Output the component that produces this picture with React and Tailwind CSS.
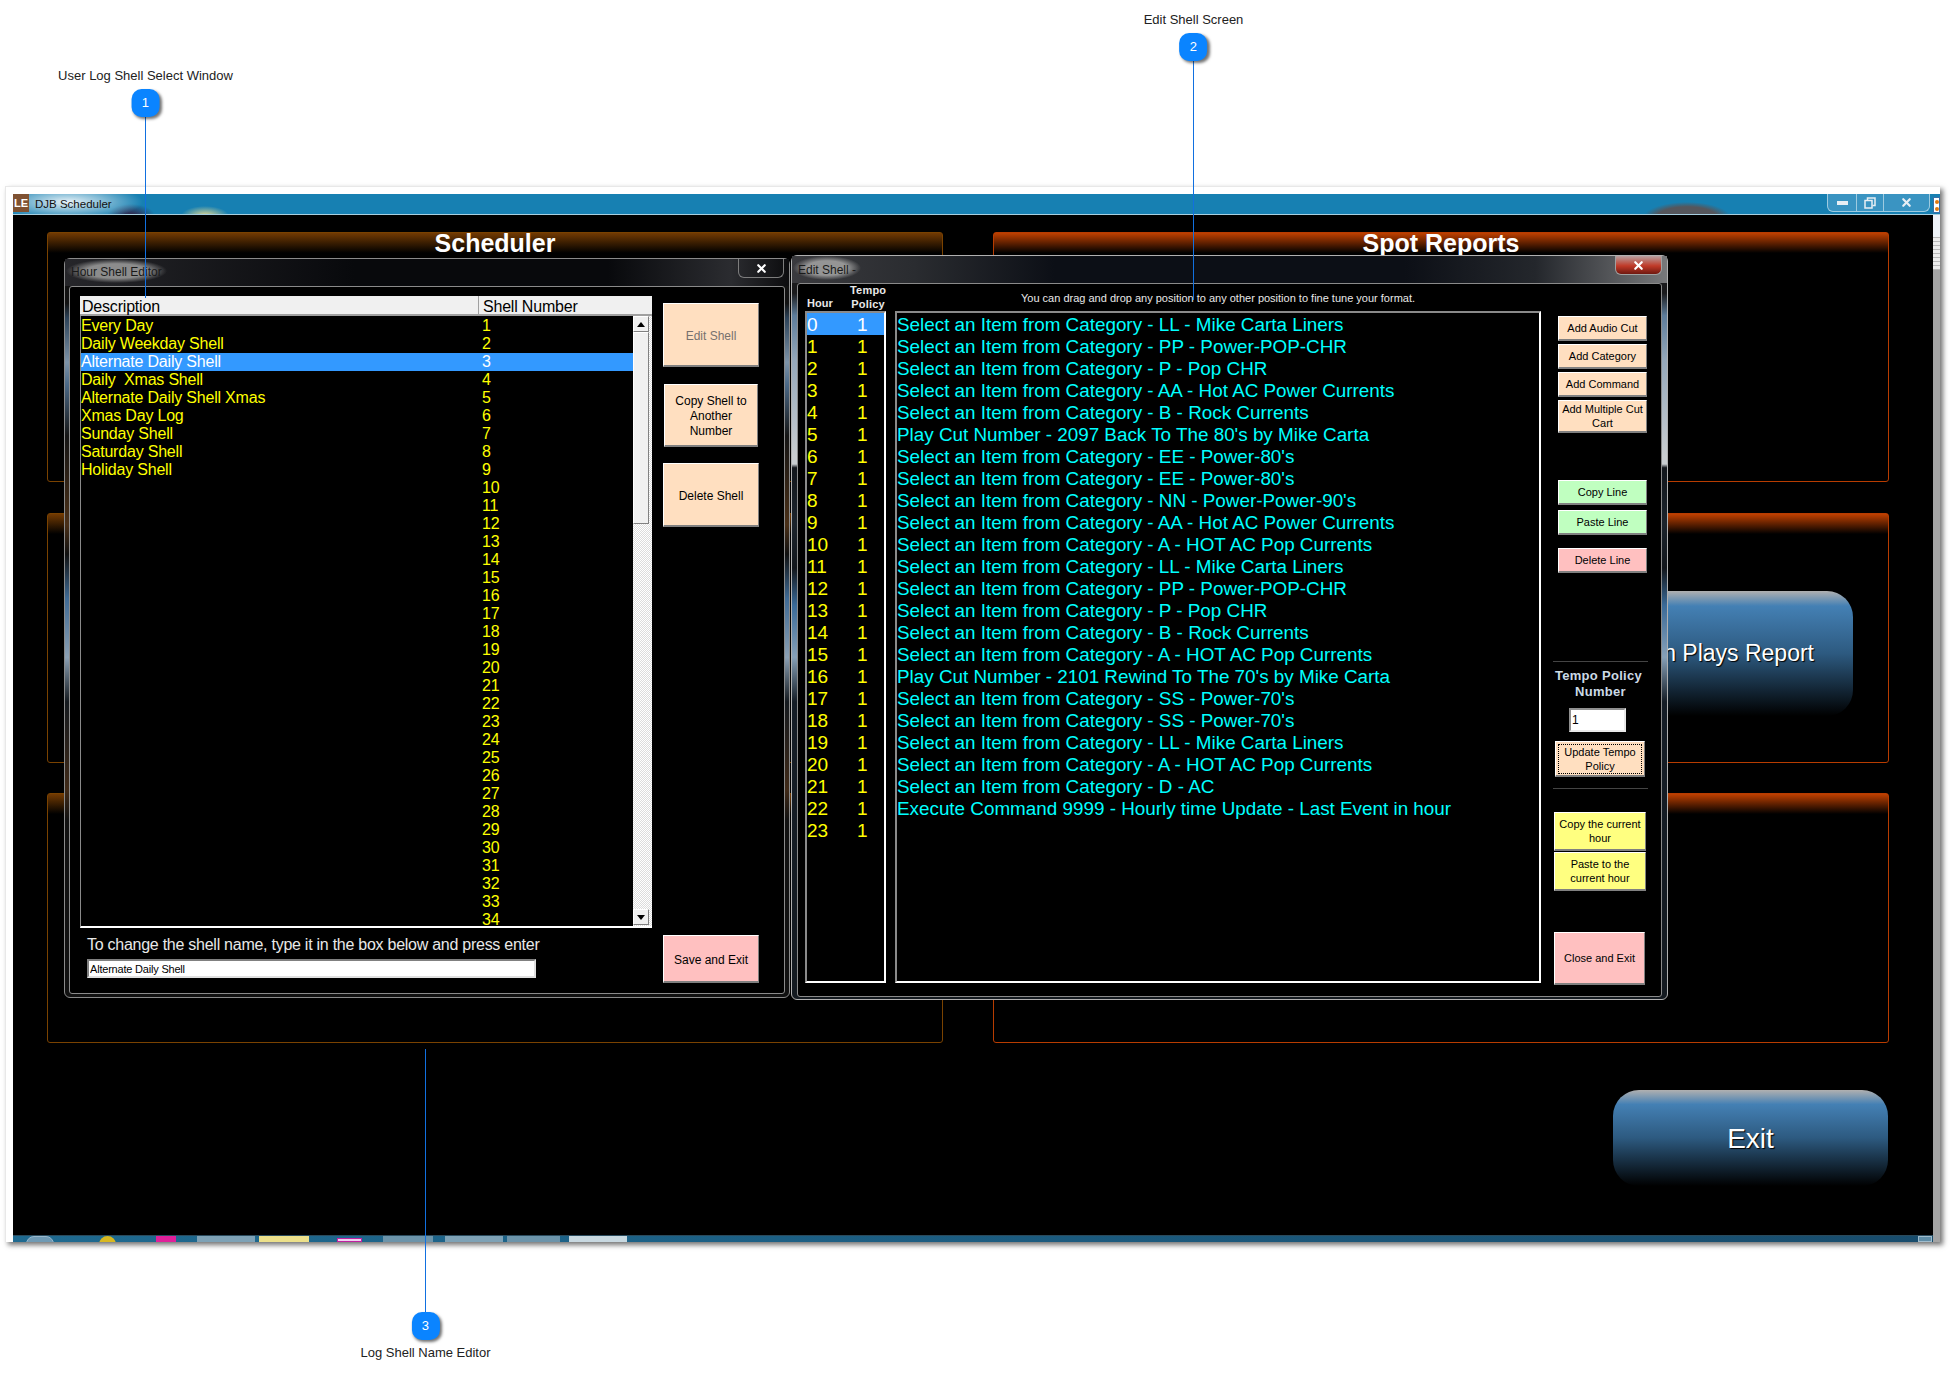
import React from "react";
import { X } from "lucide-react";

const shells = [
  "Every Day",
  "Daily Weekday Shell",
  "Alternate Daily Shell",
  "Daily  Xmas Shell",
  "Alternate Daily Shell Xmas",
  "Xmas Day Log",
  "Sunday Shell",
  "Saturday Shell",
  "Holiday Shell",
];
const shellRows = Array.from({ length: 34 }, (_, i) => ({ number: i + 1, name: shells[i] || "" }));

const hourLines = [
  "Select an Item from Category - LL - Mike Carta Liners",
  "Select an Item from Category - PP - Power-POP-CHR",
  "Select an Item from Category - P - Pop CHR",
  "Select an Item from Category - AA - Hot AC Power Currents",
  "Select an Item from Category - B - Rock Currents",
  "Play Cut Number - 2097 Back To The 80's by Mike Carta",
  "Select an Item from Category - EE - Power-80's",
  "Select an Item from Category - EE - Power-80's",
  "Select an Item from Category - NN - Power-Power-90's",
  "Select an Item from Category - AA - Hot AC Power Currents",
  "Select an Item from Category - A - HOT AC Pop Currents",
  "Select an Item from Category - LL - Mike Carta Liners",
  "Select an Item from Category - PP - Power-POP-CHR",
  "Select an Item from Category - P - Pop CHR",
  "Select an Item from Category - B - Rock Currents",
  "Select an Item from Category - A - HOT AC Pop Currents",
  "Play Cut Number - 2101 Rewind To The 70's by Mike Carta",
  "Select an Item from Category - SS - Power-70's",
  "Select an Item from Category - SS - Power-70's",
  "Select an Item from Category - LL - Mike Carta Liners",
  "Select an Item from Category - A - HOT AC Pop Currents",
  "Select an Item from Category - D - AC",
  "Execute Command 9999 - Hourly time Update - Last Event in hour",
];
const hours = Array.from({ length: 24 }, (_, i) => i);

const bevel = "flex items-center justify-center text-center border border-b-2 border-t-white border-l-white border-r-[#808080] border-b-[#808080]";

const Balloon = ({ n }) => (
  <div className="flex h-7 w-7 items-center justify-center rounded-[10px] bg-[#0a84ff] text-[13px] text-white shadow-[2px_2px_3px_rgba(0,0,0,0.55)]">
    {n}
  </div>
);

const Panel = ({ title, tone, children }) => (
  <div
    className={`h-[250px] rounded-t-[3px] rounded-b-[3px] border ${
      tone === "left" ? "border-[#7a4200]" : "border-[#b83c00]"
    }`}
  >
    <div
      className={`h-5 ${
        tone === "left"
          ? "bg-[linear-gradient(to_bottom,#723a02,#000)]"
          : "bg-[linear-gradient(to_bottom,#bf4000,#000)]"
      }`}
    >
      {title && <div className="text-center text-[25px] leading-5 font-bold text-white">{title}</div>}
    </div>
    {children}
  </div>
);

const ArrowBtn = ({ up }) => (
  <div className="flex h-4 w-4 items-center justify-center border border-t-white border-l-white border-r-[#808080] border-b-[#808080] bg-[#f0f0f0]">
    <svg width="8" height="5" viewBox="0 0 8 5">
      <polygon points={up ? "4,0 8,5 0,5" : "0,0 8,0 4,5"} fill="#000" />
    </svg>
  </div>
);

const ShellEditor = () => (
  <div className="absolute left-[64px] top-[258px] flex h-[740px] w-[726px] flex-col rounded-md border border-[#8a8a8a] bg-[linear-gradient(to_bottom,#111_0,#111_6%,#2c4258_8%,#7d93a8_14%,#4c6a88_17%,#151515_24%,#4a3018_36%,#101010_40%,#3f6a94_46%,#8ba0b4_54%,#151a1f_60%,#402a18_72%,#111_76%,#111_100%)]">
    <div className="flex h-[27px] shrink-0 justify-between bg-[linear-gradient(to_right,#26262a,#08090c_40%,#08090c_75%,#2b2c30_92%,#0c0c0e)] pl-[1px] pr-[5px]">
      <span className="h-[24px] bg-[radial-gradient(ellipse_closest-side,#8c8c8c_60%,transparent)] px-[5px] pt-[5px] text-xs text-[#1a1a1a]">
        Hour Shell Editor
      </span>
      <div className="flex h-[19px] w-[46px] items-center justify-center rounded-b-md border border-t-0 border-[#7d7d7d]">
        <X size={13} strokeWidth={4} className="text-white" />
      </div>
    </div>
    <div className="mx-1 mb-[3px] flex flex-1 gap-[11px] rounded-[3px] border border-[#8a8a8a] bg-black pl-[10px] pr-[25px] pt-[9px] pb-[10px]">
      <div className="flex w-[572px] flex-col">
        <div className="flex h-5 shrink-0 border-b-2 border-[#a0a0a0] bg-[#f0f0f0] text-base leading-[21px] tracking-[-0.2px] text-black">
          <div className="w-[399px] border-r border-[#a0a0a0] pl-[2px]">Description</div>
          <div className="pl-1">Shell Number</div>
        </div>
        <div className="flex h-[612px] shrink-0 overflow-hidden border-b-2 border-l border-b-white border-l-[#8a8a8a]">
          <div className="w-[552px] overflow-hidden pt-[1px]">
            {shellRows.map((row) => (
              <div
                key={row.number}
                className={`flex h-[18px] text-base leading-[18px] tracking-[-0.2px] ${
                  row.number === 3 ? "bg-[#3399ff] text-white" : "text-[#ffff00]"
                }`}
              >
                <span className="w-[401px] whitespace-pre">{row.name}</span>
                <span>{row.number}</span>
              </div>
            ))}
          </div>
          <div className="flex w-[19px] flex-col bg-[repeating-conic-gradient(#fff_0_25%,#dcdcdc_0_50%)] bg-[length:2px_2px] pr-[3px]">
            <ArrowBtn up />
            <div className="h-[192px] w-4 border border-t-white border-l-white border-r-[#808080] border-b-[#808080] bg-[#f0f0f0]" />
            <div className="mt-auto mb-[1px]">
              <ArrowBtn />
            </div>
          </div>
        </div>
        <p className="mt-[7px] pl-[7px] text-base leading-[20px] tracking-[-0.26px] text-[#e8e8e8]">
          To change the shell name, type it in the box below and press enter
        </p>
        <input
          readOnly
          value="Alternate Daily Shell"
          className="mt-1 ml-[7px] h-[19px] w-[449px] border-2 border-t-[#808080] border-l-[#808080] border-r-[#e0e0e0] border-b-[#e0e0e0] bg-white pl-[1px] text-[11px] tracking-[-0.2px] text-black outline-none"
        />
      </div>
      <div className="flex w-[96px] flex-col pt-[7px] text-xs text-black">
        <button className={`${bevel} h-16 bg-[#ffdfc0] pt-[2px] text-[#77716e]`}>Edit Shell</button>
        <button className={`${bevel} mx-[1px] mt-[17px] h-[63px] bg-[#ffdfc0] px-1 pt-[2px] leading-[15px]`}>
          Copy Shell to Another Number
        </button>
        <button className={`${bevel} mt-4 h-16 bg-[#ffdfc0] pt-[2px]`}>Delete Shell</button>
        <button className={`${bevel} mt-auto h-12 bg-[#ffc0c0] pt-[2px]`}>Save and Exit</button>
      </div>
    </div>
  </div>
);

const HourEditor = () => (
  <div className="absolute left-[791px] top-[255px] flex h-[745px] w-[877px] flex-col rounded-md border border-[#b0b0b0] bg-[linear-gradient(to_bottom,#1a1a1c_0,#1a1a1c_5%,#5d7c9a_8%,#95a8ba_14%,#c9cdd0_27%,#c9cdd0_28%,#12161b_28.5%,#1c242c_36%,#12161b_42%,#3a6a98_47%,#86a0b8_54%,#151d26_60%,#141a20_100%)]">
    <div className="flex h-[27px] shrink-0 justify-between bg-[linear-gradient(to_right,#3a3a3e,#2a2c30_14%,#0c0f16_30%,#0c0f16_70%,#24272c_85%,#78797b)] pl-[1px] pr-[5px]">
      <span className="h-[24px] bg-[radial-gradient(ellipse_closest-side,#959595_60%,transparent)] px-[5px] pt-[6px] text-xs text-[#1a1a1a]">
        Edit Shell -
      </span>
      <div className="flex h-[19px] w-[47px] items-center justify-center rounded-b-md border border-t-0 border-[#a0a0a0] bg-[linear-gradient(to_bottom,#b8a0a0,#c03a28_55%,#6f1810)]">
        <X size={13} strokeWidth={4} className="text-white" />
      </div>
    </div>
    <div className="mx-[5px] mb-1 flex flex-1 flex-col rounded-[3px] border border-[#8a8a8a] bg-black">
      <div className="relative h-[27px] shrink-0 text-[11px] leading-[14px] text-[#e8e8e8]">
        <div className="flex h-[27px] items-end pl-[9px] font-bold">
          <span className="w-[43px] pb-[1px]">Hour</span>
          <span className="w-9 text-center tracking-[0.2px]">
            Tempo
            <br />
            Policy
          </span>
          <span className="ml-[135px] pb-[6px] text-[11px] font-normal">
            You can drag and drop any position to any other position to fine tune your format.
          </span>
        </div>
      </div>
      <div className="flex flex-1 pb-[11px] pl-[7px]">
        <div className="h-[672px] w-[81px] shrink-0 border-2 border-t-[#8a8a8a] border-l-[#8a8a8a] border-r-white border-b-white">
          {hours.map((h) => (
            <div
              key={h}
              className={`flex h-[22px] text-[19px] leading-[23px] ${
                h === 0 ? "bg-[#3399ff] text-white" : "text-[#ffff00]"
              }`}
            >
              <span className="w-[50px]">{h}</span>
              <span>1</span>
            </div>
          ))}
        </div>
        <div className="ml-[9px] h-[672px] w-[646px] shrink-0 border-2 border-t-[#8a8a8a] border-l-[#8a8a8a] border-r-white border-b-white">
          {hourLines.map((line, i) => (
            <div key={i} className="h-[22px] whitespace-pre text-[18.85px] leading-[23px] text-[#00ffff]">
              {line}
            </div>
          ))}
        </div>
        <div className="ml-3 flex w-[95px] flex-col text-[11px] leading-[14px] text-black">
          <button className={`${bevel} mt-[5px] ml-[5px] h-[25px] w-[89px] bg-[#ffdfc0]`}>Add Audio Cut</button>
          <button className={`${bevel} mt-[3px] ml-[5px] h-[25px] w-[89px] bg-[#ffdfc0]`}>Add Category</button>
          <button className={`${bevel} mt-[3px] ml-[5px] h-[25px] w-[89px] bg-[#ffdfc0]`}>Add Command</button>
          <button className={`${bevel} mt-[3px] ml-[5px] h-[33px] w-[89px] bg-[#ffdfc0]`}>Add Multiple Cut Cart</button>
          <button className={`${bevel} mt-[47px] ml-[5px] h-[25px] w-[89px] bg-[#c0ffc0]`}>Copy Line</button>
          <button className={`${bevel} mt-[5px] ml-[5px] h-[25px] w-[89px] bg-[#c0ffc0]`}>Paste Line</button>
          <button className={`${bevel} mt-[13px] ml-[5px] h-[25px] w-[89px] bg-[#ffc0c0]`}>Delete Line</button>
          <div className="mt-[88px] h-px shrink-0 bg-[#444]" />
          <div className="mt-[6px] flex flex-col items-center text-[13px] leading-4 font-bold tracking-[0.3px] text-[#cbdae6]">
            <span className="pr-1 whitespace-nowrap">Tempo Policy</span>
            <span>Number</span>
          </div>
          <input
            readOnly
            value="1"
            className="mt-2 ml-4 h-6 w-[57px] shrink-0 border-2 border-t-[#909090] border-l-[#909090] border-r-[#e8e8e8] border-b-[#e8e8e8] bg-white pl-[1px] text-xs text-black outline-none"
          />
          <button className={`${bevel} mt-[9px] ml-[2px] h-9 w-[90px] bg-[#ffdfc0] outline-1 -outline-offset-4 outline-dotted outline-black`}>
            Update Tempo Policy
          </button>
          <div className="mt-[11px] h-px shrink-0 bg-[#444]" />
          <button className={`${bevel} mt-[23px] ml-[1px] h-[39px] w-[92px] bg-[#ffff80]`}>Copy the current hour</button>
          <button className={`${bevel} mt-[1px] ml-[1px] h-[39px] w-[92px] bg-[#ffff80] px-2`}>Paste to the current hour</button>
          <button className={`${bevel} mt-[41px] ml-[1px] h-[53px] w-[91px] bg-[#ffc0c0]`}>Close and Exit</button>
        </div>
      </div>
    </div>
  </div>
);

export default function App() {
  return (
    <div className="relative h-[1377px] overflow-hidden bg-white pt-[186px] font-['Liberation_Sans',Arial,sans-serif]">
      <div className="ml-[5px] flex h-[1056px] w-[1935px] flex-col border-t border-l border-[#e8e8e8] bg-white pt-[7px] pl-[7px] shadow-[3px_3px_5px_rgba(0,0,0,0.55)]">
        {/* title bar */}
        <div className="flex h-[21px] shrink-0 border-b border-[#a8cfe0] bg-[#1780b2] bg-[radial-gradient(ellipse_75px_18px_at_55px_8px,rgba(255,255,255,0.9),transparent),radial-gradient(ellipse_24px_12px_at_118px_22px,#351a3c,transparent),radial-gradient(ellipse_24px_10px_at_192px_22px,#ecdc90,transparent),radial-gradient(ellipse_44px_16px_at_1674px_24px,#55565c_70%,transparent)]">
          <div className="flex h-[18px] w-4 items-center justify-center bg-[#7f5233] text-[11px] leading-none font-bold text-white">
            LE
          </div>
          <span className="ml-[6px] text-[11.5px] leading-[21px] text-[#111]">DJB Scheduler</span>
          <div className="ml-auto flex h-[18px] w-[103px] items-center rounded-b-md border border-t-0 border-[#9ecbe0] bg-[#3a94c2] text-[#e8eef4]">
            <div className="flex h-full w-[29px] items-center justify-center border-r border-[#9ecbe0]">
              <div className="h-[4px] w-[11px] bg-[#e8eef4]" />
            </div>
            <div className="flex h-full w-[27px] items-center justify-center border-r border-[#9ecbe0]">
              <svg width="12" height="12" viewBox="0 0 12 12" fill="none" stroke="#e8eef4" strokeWidth="1.5">
                <rect x="1" y="3.5" width="7" height="7.5" />
                <path d="M3.5 3V1H11V8.5H8.5" />
              </svg>
            </div>
            <div className="flex flex-1 items-center justify-center">
              <X size={13} strokeWidth={4} />
            </div>
          </div>
          <div className="ml-[3px] mt-[3px] flex h-4 w-[7px] flex-col items-center justify-around border border-[#3a70a8] bg-white">
            <div className="h-1 w-1 rounded-full bg-[#e07a10]" />
            <div className="h-1 w-1 rounded-full bg-[#e07a10]" />
          </div>
        </div>
        <div className="flex flex-1">
          <div className="flex w-[1920px] flex-col">
            {/* main screen */}
            <div className="relative h-[1020px] bg-black pl-[34px] pt-[17px]">
              <div className="grid w-[1842px] grid-cols-2 gap-x-[50px] gap-y-[30.5px]">
                <Panel title="Scheduler" tone="left" />
                <Panel title="Spot Reports" tone="right" />
                <Panel tone="left" />
                <Panel tone="right">
                  <div className="flex justify-end pt-[57px] pr-[35px]">
                    <button className="flex h-[125px] w-[275px] items-center justify-end rounded-[26px] bg-[linear-gradient(to_bottom,#b0b0b0_0,#4480b4_12%,#2d5a80_50%,#000_100%)] pr-[39px] text-[23px] text-white [text-shadow:1px_1px_1px_#000]">
                      n Plays Report
                    </button>
                  </div>
                </Panel>
                <Panel tone="left" />
                <Panel tone="right" />
              </div>
              <div className="flex w-[1841px] justify-end pt-[47px]">
                <button className="flex h-24 w-[275px] items-center justify-center rounded-[26px] bg-[linear-gradient(to_bottom,#b0b0b0_0,#4480b4_15%,#2d5a80_50%,#000_100%)] pt-[2px] text-[28px] text-white [text-shadow:1px_1px_1px_#000]">
                  Exit
                </button>
              </div>
            </div>
            {/* taskbar, only its top shows */}
            <div className="flex h-[7px] overflow-hidden border-t border-[#2a4a5c] bg-[linear-gradient(to_right,#1f6a90,#1c5f84_40%,#184c6c)]">
              <div className="ml-[13px] h-4 w-7 rounded-full border border-[#9ab8cc] bg-[#6f9ab4]" />
              <div className="ml-[45px] h-3 w-[17px] rounded-t-full bg-[#d8b820]" />
              <div className="ml-10 h-3 w-5 bg-[#e0209a]" />
              <div className="ml-[21px] w-[58px] bg-[#7ea2b6]" />
              <div className="ml-1 w-[50px] bg-[#ece08a]" />
              <div className="ml-7 mt-[2px] w-[25px] border border-[#c020a0] bg-[#f0d0f0]" />
              <div className="ml-[21px] w-[50px] bg-[#6c94aa]" />
              <div className="ml-3 w-[58px] bg-[#7ea2b6]" />
              <div className="ml-1 w-[53px] bg-[#6c94aa]" />
              <div className="ml-[9px] w-[58px] bg-[#c8d8e0]" />
              <div className="ml-auto mr-[1px] w-[14px] border border-[#a0bccc] bg-[#5e8ca6]" />
            </div>
          </div>
          {/* page scrollbar */}
          <div className="flex w-[7px] flex-col bg-[#a4a4a4]">
            <div className="h-[22px] bg-[#eef3f8]" />
            <div className="h-[33px] bg-[repeating-linear-gradient(to_bottom,#b8b8b8_0,#b8b8b8_1px,#ececec_1px,#ececec_4px)]" />
          </div>
        </div>
      </div>

      <ShellEditor />
      <HourEditor />

      {/* callouts */}
      <div className="absolute left-[145px] top-[117px] h-[181px] w-px bg-[#1170e0]" />
      <div className="absolute left-[1193px] top-[61px] h-[239px] w-px bg-[#1170e0]" />
      <div className="absolute left-[425px] top-[1049px] h-[263px] w-px bg-[#1170e0]" />

      <div className="absolute left-[145.5px] top-[69px] flex -translate-x-1/2 flex-col items-center gap-[6px] text-[13px] leading-[14px] whitespace-nowrap text-[#222]">
        <span>User Log Shell Select Window</span>
        <Balloon n={1} />
      </div>
      <div className="absolute left-[1193.5px] top-[13px] flex -translate-x-1/2 flex-col items-center gap-[6px] text-[13px] leading-[14px] whitespace-nowrap text-[#222]">
        <span>Edit Shell Screen</span>
        <Balloon n={2} />
      </div>
      <div className="absolute left-[425.5px] top-[1312px] flex -translate-x-1/2 flex-col items-center gap-[6px] text-[13px] leading-[14px] whitespace-nowrap text-[#222]">
        <Balloon n={3} />
        <span>Log Shell Name Editor</span>
      </div>
    </div>
  );
}
